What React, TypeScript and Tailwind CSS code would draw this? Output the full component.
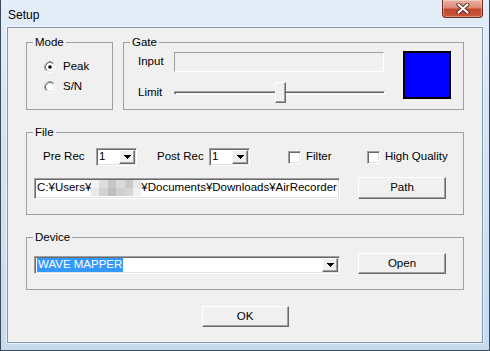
import React from "react";

const raised =
  "border border-t-white border-l-white border-r-[#696969] border-b-[#696969] shadow-[inset_-1px_-1px_0_#a0a0a0] bg-[#f0f0f0]";
const sunken =
  "border border-t-[#a0a0a0] border-l-[#a0a0a0] border-r-white border-b-white shadow-[inset_1px_1px_0_#696969,inset_-1px_-1px_0_#e3e3e3]";

function Arrow() {
  return (
    <svg width="7" height="4" viewBox="0 0 7 4" shapeRendering="crispEdges">
      <path d="M0 0h7v1h-1v1h-1v1h-1v1h-1v-1h-1v-1h-1v-1h-1z" fill="#000" />
    </svg>
  );
}

function Combo({ className = "", children }: { className?: string; children: React.ReactNode }) {
  return (
    <div className={`${sunken} bg-white p-[1px] flex ${className}`}>
      <div className="flex-1 flex items-center pl-[1px] overflow-hidden whitespace-nowrap leading-none">{children}</div>
      <div className={`${raised} w-[16px] flex items-center justify-center`}>
        <Arrow />
      </div>
    </div>
  );
}

function Btn({ className = "", children }: { className?: string; children: React.ReactNode }) {
  return (
    <button type="button" className={`${raised} flex items-center justify-center leading-none ${className}`}>
      {children}
    </button>
  );
}

function Radio({ checked }: { checked?: boolean }) {
  return (
    <svg width="12" height="12" viewBox="0 0 12 12">
      <circle cx="6" cy="6" r="5.5" fill="none" stroke="#fff" />
      <path d="M2.11 9.89A5.5 5.5 0 0 1 9.89 2.11" fill="none" stroke="#a0a0a0" />
      <circle cx="6" cy="6" r="4.5" fill="#fff" stroke="#e3e3e3" />
      <path d="M2.82 9.18A4.5 4.5 0 0 1 9.18 2.82" fill="none" stroke="#696969" />
      {checked && <circle cx="6" cy="6" r="1.8" fill="#000" />}
    </svg>
  );
}

function Check() {
  return <div className={`${sunken} bg-white w-[13px] h-[13px] shrink-0`} />;
}

function Group({ label, className = "", children }: { label: string; className?: string; children?: React.ReactNode }) {
  return (
    <div className={`relative border border-[#a0a0a0] ${className}`}>
      <span className="absolute -top-[8px] left-[6px] bg-[#f0f0f0] px-[2px] leading-[14px]">{label}</span>
      {children}
    </div>
  );
}

function Mosaic() {
  return (
    <span className="inline-flex flex-col w-[50px] h-[16px] align-middle">
      <span className="flex h-[8px]">
        <span className="w-[8px] bg-[#f2f2f2]" />
        <span className="w-[9px] bg-[#dedede]" />
        <span className="w-[8px] bg-[#c6c6c6]" />
        <span className="w-[9px] bg-[#dadada]" />
        <span className="w-[8px] bg-[#cacaca]" />
        <span className="w-[8px] bg-[#e8e8e8]" />
      </span>
      <span className="flex h-[8px]">
        <span className="w-[8px] bg-[#e9e9e9]" />
        <span className="w-[9px] bg-[#d2d2d2]" />
        <span className="w-[8px] bg-[#bfbfbf]" />
        <span className="w-[9px] bg-[#d0d0d0]" />
        <span className="w-[8px] bg-[#d6d6d6]" />
        <span className="w-[8px] bg-[#f0f0f0]" />
      </span>
    </span>
  );
}

export default function App() {
  return (
    <div className="w-[490px] h-[351px] relative overflow-hidden flex flex-col border-x border-b border-[#3c4b5c] bg-[linear-gradient(180deg,#e4eef8_0%,#d6e5f4_30%,#c7dbef_100%)] font-['Liberation_Sans',Arial,sans-serif] text-[11.5px] text-black">
      {/* title bar */}
      <div className="h-[27px] shrink-0 flex items-center pl-[7px] pt-[2px] text-[12px]">Setup</div>
      <div className="absolute top-0 right-[6px] w-[41px] h-[18px] rounded-b-[4px] border border-t-0 border-[#6b2a1f] bg-[linear-gradient(180deg,#eab1a3_0%,#dc8a76_45%,#c2452d_55%,#c9573c_100%)] flex items-center justify-center shadow-[inset_0_0_0_1px_rgba(255,255,255,0.35)]">
        <svg width="14" height="11" viewBox="0 0 14 11">
          <path d="M2.5 1.5L11.5 9.5M11.5 1.5L2.5 9.5" stroke="#5a2418" strokeWidth="4" strokeLinecap="round" />
          <path d="M2.5 1.5L11.5 9.5M11.5 1.5L2.5 9.5" stroke="#fff" strokeWidth="2.2" strokeLinecap="round" />
        </svg>
      </div>

      {/* client */}
      <div className="mx-[6px] h-[316px] shrink-0 bg-[#f0f0f0] border border-[#8197b0] shadow-[0_0_0_1px_rgba(255,255,255,0.6)] flex flex-col pt-[14px] px-[18px]">
        {/* row 1 */}
        <div className="flex gap-[10px] h-[68px] shrink-0">
          <Group label="Mode" className="w-[87px]">
            <div className="flex flex-col pt-[14px] pl-[17px]">
              <div className="flex items-center h-[20px] gap-[7px]">
                <Radio checked />
                <span>Peak</span>
              </div>
              <div className="flex items-center h-[20px] gap-[7px]">
                <Radio />
                <span>S/N</span>
              </div>
            </div>
          </Group>
          <Group label="Gate" className="flex-1">
            <div className="flex pl-[14px] pt-[8px]">
              <div className="flex flex-col pt-[1px]">
                <div className="flex items-center h-[20px]">
                  <span className="w-[36px]">Input</span>
                  <div className="w-[210px] h-[20px] border border-t-[#a0a0a0] border-l-[#a0a0a0] border-r-white border-b-white bg-[#f0f0f0]" />
                </div>
                <div className="flex items-center h-[21px] mt-[10px]">
                  <span className="w-[36px]">Limit</span>
                  <div className="relative w-[211px] h-[21px] flex items-center">
                    <div className="w-full h-[4px] border border-t-[#a0a0a0] border-l-[#a0a0a0] border-r-white border-b-white shadow-[inset_1px_1px_0_#696969]" />
                    <div className={`absolute left-[101px] top-0 w-[11px] h-[21px] ${raised}`} />
                  </div>
                </div>
              </div>
              <div className="ml-[18px] w-[48px] h-[48px] border-2 border-black bg-[#0000ff]" />
            </div>
          </Group>
        </div>

        {/* File */}
        <Group label="File" className="mt-[22px] h-[83px] shrink-0">
          <div className="flex items-center h-[18px] mt-[15px] pl-[16px]">
            <span className="w-[53px]">Pre Rec</span>
            <Combo className="w-[41px] h-[18px]">1</Combo>
            <span className="w-[52px] ml-[20px]">Post Rec</span>
            <Combo className="w-[41px] h-[18px]">1</Combo>
            <div className="ml-[38px] flex items-center gap-[5px]">
              <Check />
              <span className="w-[61px]">Filter</span>
            </div>
            <div className="flex items-center gap-[5px]">
              <Check />
              <span>High Quality</span>
            </div>
          </div>
          <div className="flex items-center h-[22px] mt-[11px] pl-[7px]">
            <div className={`${sunken} bg-white w-[306px] h-[21px] flex items-center pl-[2px] whitespace-nowrap overflow-hidden`}>
              <span>C:¥Users¥</span>
              <Mosaic />
              <span>¥Documents¥Downloads¥AirRecorder</span>
            </div>
            <Btn className="ml-[18px] w-[88px] h-[22px]">Path</Btn>
          </div>
        </Group>

        {/* Device */}
        <Group label="Device" className="mt-[22px] h-[53px] shrink-0">
          <div className="flex items-end pt-[15px] pl-[7px]">
            <Combo className="w-[306px] h-[18px]">
              <span className="bg-[#3399ff] text-white px-[1px] py-[2px]">WAVE MAPPER</span>
            </Combo>
            <Btn className="ml-[18px] w-[88px] h-[21px]">Open</Btn>
          </div>
        </Group>

        <Btn className="mt-[16px] self-center w-[87px] h-[21px] shrink-0">OK</Btn>
      </div>
    </div>
  );
}
